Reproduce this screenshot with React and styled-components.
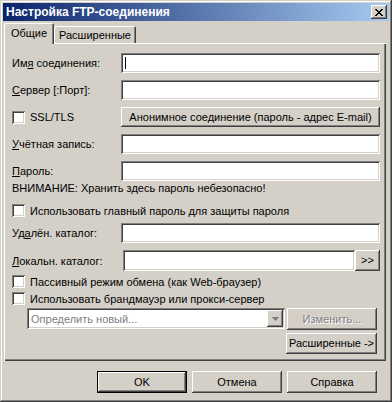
import React from "react";
import styled, { createGlobalStyle } from "styled-components";

const GlobalStyle = createGlobalStyle`
  body {
    margin: 0;
    background: #d4d0c8;
    font-family: "Liberation Sans", Arial, sans-serif;
    font-size: 11px;
    color: #000;
  }
`;

const raised = `
  background: #d4d0c8;
  box-shadow: inset -1px -1px #404040, inset 1px 1px #fff,
    inset -2px -2px #808080, inset 2px 2px #d4d0c8;
`;

const sunken = `
  box-shadow: inset 1px 1px #808080, inset -1px -1px #fff,
    inset 2px 2px #404040, inset -2px -2px #d4d0c8;
`;

const Window = styled.div`
  width: 392px;
  height: 402px;
  box-sizing: border-box;
  padding: 3px;
  background: #d4d0c8;
  box-shadow: inset -1px -1px #404040, inset 1px 1px #d4d0c8,
    inset -2px -2px #808080, inset 2px 2px #fff;
  display: flex;
  flex-direction: column;
`;

const TitleBar = styled.div`
  height: 18px;
  display: flex;
  align-items: center;
  padding: 0 2px 0 3px;
  background: linear-gradient(to right, #0a246a, #a6caf0);
  color: #fff;
  font-weight: bold;
  font-size: 12px;
`;

const CloseButton = styled.div`
  ${raised}
  margin-left: auto;
  width: 16px;
  height: 14px;
  display: flex;
  align-items: center;
  justify-content: center;
`;

const Body = styled.div`
  display: flex;
  flex-direction: column;
  padding: 2px 3px 0 1px;
`;

const TabStrip = styled.div`
  display: flex;
  align-items: flex-end;
  height: 21px;
  margin-bottom: -1px;
  position: relative;
  z-index: 1;
`;

const Tab = styled.div`
  width: ${(p) => p.$w}px;
  height: ${(p) => (p.$active ? 21 : 17)}px;
  margin-bottom: ${(p) => (p.$active ? 0 : 1)}px;
  box-sizing: border-box;
  padding-bottom: ${(p) => (p.$active ? 2 : 0)}px;
  display: flex;
  align-items: center;
  justify-content: center;
  background: #d4d0c8;
  border-radius: 2px 2px 0 0;
  box-shadow: inset 1px 1px #fff, inset -1px 0 #404040, inset -2px 0 #808080;
`;

const Panel = styled.div`
  height: 318px;
  box-sizing: border-box;
  padding: 10px 6px 0 8px;
  display: flex;
  flex-direction: column;
  box-shadow: inset 1px 1px #fff, inset -1px -1px #404040,
    inset -2px -2px #808080;
`;

const FieldRow = styled.div`
  display: grid;
  grid-template-columns: ${(p) => p.$label || 109}px 1fr ${(p) =>
      p.$extra ? `${p.$extra}px` : ""};
  align-items: center;
  height: ${(p) => p.$h || 20}px;
  margin-top: ${(p) => p.$mt || 0}px;
`;

const Field = styled.div`
  ${sunken}
  background: #fff;
  height: 100%;
  box-sizing: border-box;
  padding: 4px 0 0 4px;
`;

const Caret = styled.div`
  width: 1px;
  height: 12px;
  background: #000;
`;

const Button = styled.div`
  ${(p) =>
    p.$default
      ? `background: #d4d0c8;
    box-shadow: inset 0 0 0 1px #000, inset -2px -2px #404040, inset 2px 2px #fff,
      inset -3px -3px #808080;`
      : raised}
  width: ${(p) => (p.$w ? `${p.$w}px` : "auto")};
  height: ${(p) => p.$h || 21}px;
  box-sizing: border-box;
  display: flex;
  align-items: center;
  justify-content: center;
  padding-bottom: 1px;
  color: ${(p) => (p.$disabled ? "#808080" : "#000")};
  text-shadow: ${(p) => (p.$disabled ? "1px 1px #fff" : "none")};
`;

const CheckRow = styled.div`
  display: flex;
  align-items: center;
  gap: 5px;
  height: 13px;
  margin-top: ${(p) => p.$mt || 0}px;
`;

const Box = styled.div`
  ${sunken}
  background: #fff;
  width: 13px;
  height: 13px;
  flex: none;
`;

const Warning = styled.div`
  line-height: 13px;
  margin-top: 1px;
`;

const ComboRow = styled.div`
  display: flex;
  align-items: flex-start;
  gap: 2px;
  height: 22px;
  padding-left: 15px;
  margin-top: 3px;
`;

const Combo = styled.div`
  ${sunken}
  background: #fff;
  width: 258px;
  height: 21px;
  box-sizing: border-box;
  padding: 2px;
  display: flex;
  align-items: center;
`;

const ComboText = styled.div`
  flex: 1;
  padding-left: 2px;
  color: #808080;
`;

const DropButton = styled.div`
  ${raised}
  width: 16px;
  height: 17px;
  display: flex;
  align-items: center;
  justify-content: center;
`;

const RightRow = styled.div`
  display: flex;
  justify-content: flex-end;
  padding-right: 3px;
  margin-top: 3px;
`;

const ButtonBar = styled.div`
  display: flex;
  justify-content: flex-end;
  gap: 5px;
  margin-top: 10px;
  padding-right: 9px;
`;

const CloseGlyph = () => (
  <svg width="8" height="7" viewBox="0 0 8 7" shapeRendering="crispEdges">
    <path
      d="M0 0h2v1H0zM6 0h2v1H6zM1 1h2v1H1zM5 1h2v1H5zM2 2h4v1H2zM3 3h2v1H3zM2 4h4v1H2zM1 5h2v1H1zM5 5h2v1H5zM0 6h2v1H0zM6 6h2v1H6z"
      fill="#000"
    />
  </svg>
);

const Arrow = () => (
  <svg width="7" height="4" viewBox="0 0 7 4" shapeRendering="crispEdges">
    <path d="M0 0h7v1H0zM1 1h5v1H1zM2 2h3v1H2zM3 3h1v1H3z" fill="#808080" />
  </svg>
);

export default function App() {
  return (
    <>
      <GlobalStyle />
      <Window>
        <TitleBar>
          Настройка FTP-соединения
          <CloseButton>
            <CloseGlyph />
          </CloseButton>
        </TitleBar>
        <Body>
          <TabStrip>
            <Tab $active $w={50}>
              Общие
            </Tab>
            <Tab $w={82}>Расширенные</Tab>
          </TabStrip>
          <Panel>
            <FieldRow>
              <span>
                Им<u>я</u> соединения:
              </span>
              <Field>
                <Caret />
              </Field>
            </FieldRow>
            <FieldRow $mt={7}>
              <span>
                <u>С</u>ервер [:Порт]:
              </span>
              <Field />
            </FieldRow>
            <FieldRow $mt={7}>
              <CheckRow>
                <Box />
                SSL/TLS
              </CheckRow>
              <Button $h={20}>Анонимное соединение (пароль - адрес E-mail)</Button>
            </FieldRow>
            <FieldRow $mt={7}>
              <span>
                <u>У</u>чётная запись:
              </span>
              <Field />
            </FieldRow>
            <FieldRow $mt={7}>
              <span>
                <u>П</u>ароль:
              </span>
              <Field />
            </FieldRow>
            <Warning>ВНИМАНИЕ: Хранить здесь пароль небезопасно!</Warning>
            <CheckRow $mt={9}>
              <Box />
              Использовать главный пароль для защиты пароля
            </CheckRow>
            <FieldRow $mt={6}>
              <span>
                Уд<u>а</u>лён. каталог:
              </span>
              <Field />
            </FieldRow>
            <FieldRow $mt={7} $h={21} $label={111} $extra={25}>
              <span>
                <u>Л</u>окальн. каталог:
              </span>
              <Field />
              <Button $h={21}>&gt;&gt;</Button>
            </FieldRow>
            <CheckRow $mt={4}>
              <Box />
              Пассивный режим обмена (как Web-браузер)
            </CheckRow>
            <CheckRow $mt={4}>
              <Box />
              Использовать брандмауэр или прокси-сервер
            </CheckRow>
            <ComboRow>
              <Combo>
                <ComboText>Определить новый...</ComboText>
                <DropButton>
                  <Arrow />
                </DropButton>
              </Combo>
              <Button $w={90} $h={22} $disabled>
                Изменить...
              </Button>
            </ComboRow>
            <RightRow>
              <Button $w={91} $h={21}>
                Расширенные -&gt;
              </Button>
            </RightRow>
          </Panel>
          <ButtonBar>
            <Button $default $w={90} $h={22}>
              OK
            </Button>
            <Button $w={90} $h={22}>
              Отмена
            </Button>
            <Button $w={90} $h={22}>
              Справка
            </Button>
          </ButtonBar>
        </Body>
      </Window>
    </>
  );
}
